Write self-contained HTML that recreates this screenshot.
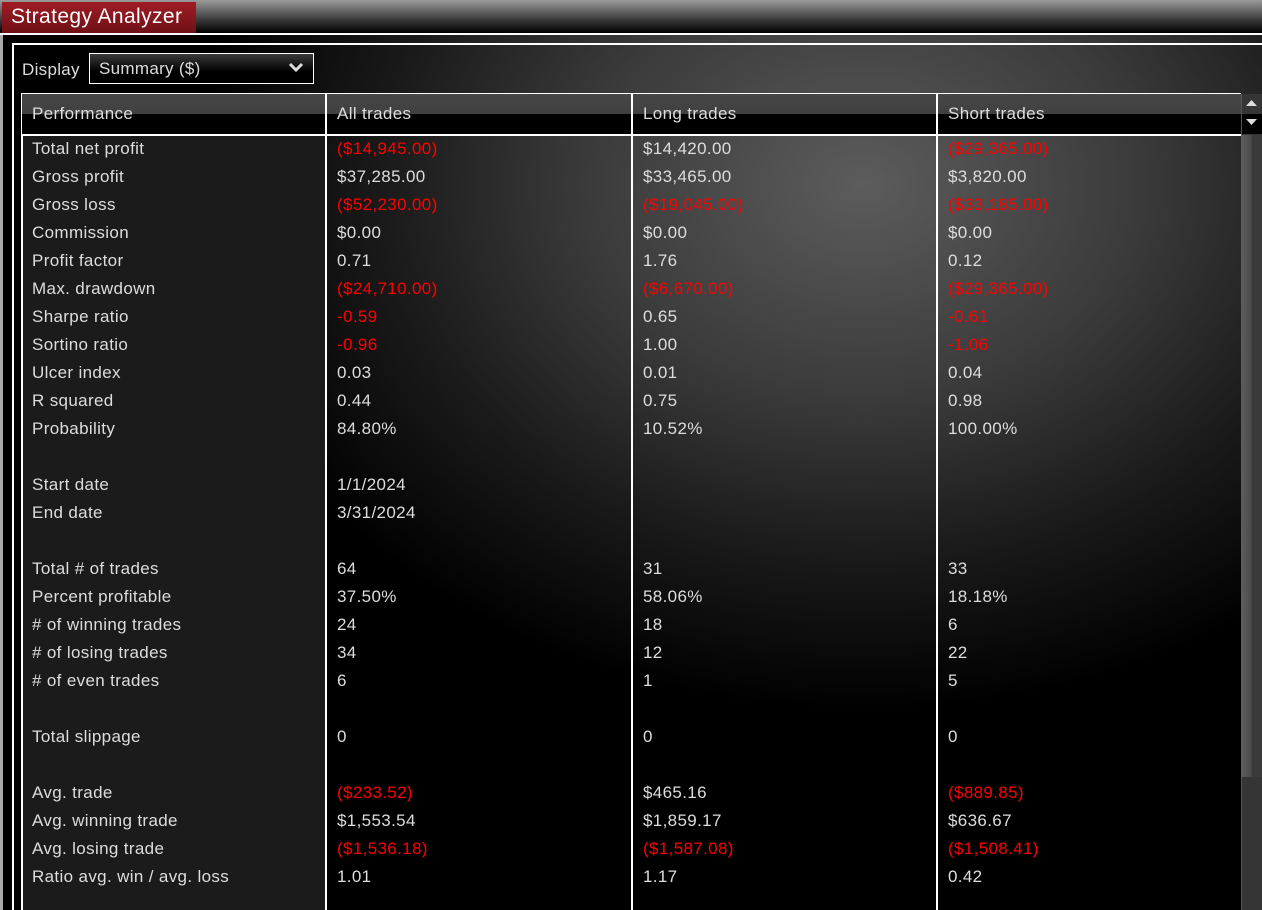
<!DOCTYPE html>
<html><head><style>
*{margin:0;padding:0;box-sizing:border-box}
body{width:1262px;height:910px;overflow:hidden;background:#000;font-family:"Liberation Sans",Arial,sans-serif;color:#ddd;position:relative}
.titlebar{position:absolute;left:0;top:0;width:1262px;height:33px;background:linear-gradient(#9a9a9a,#3a3a3a 60%,#000)}
.tab{position:absolute;left:2px;top:2px;width:194px;height:31px;background:linear-gradient(#a01c24,#6e1016);color:#fff;font-size:21px;letter-spacing:0.4px;padding:3px 0 0 9px}
.l1{position:absolute;left:0;top:33px;width:1262px;height:2px;background:#fff}
.lb{position:absolute;left:0;top:35px;width:3px;height:875px;background:#aaa}
.panel{position:absolute;left:3px;top:35px;width:1259px;height:875px;background:radial-gradient(ellipse 800px 620px at 860px 150px,#5c5c5c,#3a3a3a 35%,#1a1a1a 60%,#000 85%)}
.box{position:absolute;left:12px;top:43px;width:1250px;height:867px;border-left:2px solid #fff;border-top:2px solid #fff}
.disp{position:absolute;left:22px;top:60px;font-size:17px;letter-spacing:0.3px}
.sel{position:absolute;left:89px;top:53px;width:225px;height:31px;border:1px solid #fff;background:linear-gradient(#3a3a3a,#000 60%);font-size:17px;letter-spacing:0.3px;padding:5px 0 0 9px}
.sel svg{position:absolute;right:9px;top:8px}
.tbl{position:absolute;left:21px;top:93px;width:1220px;height:817px;border-left:2px solid #fff;border-top:1px solid #fff}
.hdr{position:absolute;left:22px;top:94px;width:1219px;height:40px;background:linear-gradient(#474747 0,#404040 50%,#000 50%)}
.hl{position:absolute;left:22px;top:134px;width:1219px;height:2px;background:#fff}
.col0{position:absolute;left:23px;top:136px;width:303px;height:774px;background:#1b1b1b}
.vl{position:absolute;top:94px;width:2px;height:816px;background:#fff}
.t{position:absolute;font-size:17px;letter-spacing:0.35px;white-space:nowrap;line-height:20px}
.r{color:#f00}
.sb{position:absolute;left:1241px;top:94px;width:21px;height:816px;background:#353535;border-left:1px solid #555}
.thumb{position:absolute;left:1241px;top:135px;width:21px;height:642px;background:linear-gradient(90deg,#5e5e5e,#4a4a4a 50%,#3a3a3a 52%)}
</style></head><body>
<div class="titlebar"></div>
<div class="tab">Strategy Analyzer</div>
<div class="l1"></div>
<div class="panel"></div>
<div class="lb"></div>
<div class="box"></div>
<div class="disp">Display</div>
<div class="sel">Summary ($)<svg width="16" height="12" viewBox="0 0 16 12"><path d="M2 2l6 6 6-6" stroke="#ddd" stroke-width="3" fill="none"/></svg></div>
<div class="tbl"></div>
<div class="hdr"></div>
<div class="col0"></div>
<div class="hl"></div>
<div class="vl" style="left:325px"></div>
<div class="vl" style="left:631px"></div>
<div class="vl" style="left:936px"></div>
<div class="sb"></div>
<div class="thumb"></div>
<svg style="position:absolute;left:1241px;top:94px" width="21" height="42"><path d="M5 12h11l-5.5-6z" fill="#ddd"/><rect x="1" y="20" width="20" height="20" fill="#000"/><path d="M5 25h11l-5.5 6z" fill="#ddd"/></svg>
<div id="rows"></div>
<script>
var H=[["Performance","All trades","Long trades","Short trades"]];
var R=[
["Total net profit","($14,945.00)","$14,420.00","($29,365.00)"],
["Gross profit","$37,285.00","$33,465.00","$3,820.00"],
["Gross loss","($52,230.00)","($19,045.00)","($33,185.00)"],
["Commission","$0.00","$0.00","$0.00"],
["Profit factor","0.71","1.76","0.12"],
["Max. drawdown","($24,710.00)","($6,670.00)","($29,365.00)"],
["Sharpe ratio","-0.59","0.65","-0.61"],
["Sortino ratio","-0.96","1.00","-1.06"],
["Ulcer index","0.03","0.01","0.04"],
["R squared","0.44","0.75","0.98"],
["Probability","84.80%","10.52%","100.00%"],
null,
["Start date","1/1/2024","",""],
["End date","3/31/2024","",""],
null,
["Total # of trades","64","31","33"],
["Percent profitable","37.50%","58.06%","18.18%"],
["# of winning trades","24","18","6"],
["# of losing trades","34","12","22"],
["# of even trades","6","1","5"],
null,
["Total slippage","0","0","0"],
null,
["Avg. trade","($233.52)","$465.16","($889.85)"],
["Avg. winning trade","$1,553.54","$1,859.17","$636.67"],
["Avg. losing trade","($1,536.18)","($1,587.08)","($1,508.41)"],
["Ratio avg. win / avg. loss","1.01","1.17","0.42"]];
var X=[32,337,643,948],h="";
H[0].forEach(function(s,i){h+='<div class="t" style="left:'+X[i]+'px;top:104px">'+s+'</div>'});
R.forEach(function(r,k){if(!r)return;var y=139+k*28;r.forEach(function(s,i){h+='<div class="t'+(s[0]=="("||s[0]=="-"?" r":"")+'" style="left:'+X[i]+'px;top:'+y+'px">'+s+'</div>'})});
document.getElementById("rows").innerHTML=h;
</script>
</body></html>
